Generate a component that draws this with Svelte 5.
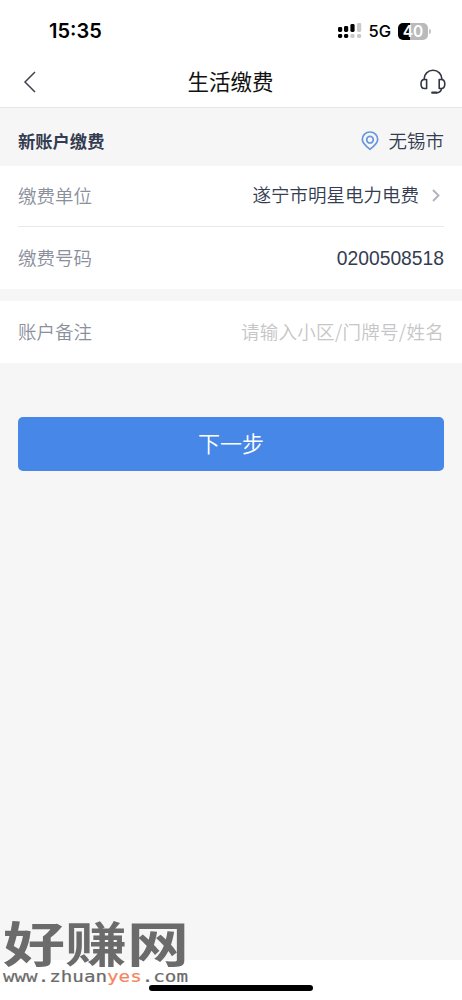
<script lang="ts">
  let time = '15:35'
  let battery = 40
  let city = '无锡市'
  let company = '遂宁市明星电力电费'
  let account = '0200508518'
  let note = ''
</script>

<div class="page">
  <header>
    <div class="status">
      <span class="time">{time}</span>
      <div class="indicators">
        <svg class="signal" width="24" height="16" viewBox="0 0 24 16">
          <g fill="#000">
            <rect x="0" y="4" width="4.2" height="5" rx="1.4" />
            <rect x="6" y="3" width="4.2" height="6" rx="1.4" />
            <rect x="12.4" y="1" width="4.2" height="8" rx="1.4" />
            <rect x="0" y="11" width="4.2" height="4" rx="1.4" />
            <rect x="6" y="11" width="4.2" height="4" rx="1.4" />
          </g>
          <g fill="#c9c9c9">
            <rect x="19" y="0" width="4.2" height="9" rx="1.4" />
            <rect x="12.4" y="11" width="4.2" height="4" rx="1.4" />
            <rect x="19" y="11" width="4.2" height="4" rx="1.4" />
          </g>
        </svg>
        <span class="network">5G</span>
        <span class="battery" style="--level: {battery}%">{battery}</span>
        <i class="cap"></i>
      </div>
    </div>

    <nav>
      <svg class="back" width="14" height="22" viewBox="0 0 14 22">
        <path d="M12 1 2 11l10 10" fill="none" stroke="#41434d" stroke-width="1.5" />
      </svg>
      <h1>生活缴费</h1>
      <svg class="service" width="26" height="26" viewBox="0 0 26 26">
        <g fill="none" stroke="#333640" stroke-width="1.6" stroke-linecap="round" stroke-linejoin="round">
          <path d="M4 10.5C4 5 8 1.3 13 1.3S22 5 22 10.5" />
          <path d="M6.6 10.5v9H4.4C2.3 19.5 1 17.7 1 15s1.3-4.5 3.4-4.5z" />
          <path d="M19.2 10.5v9h2.1c2.1 0 3.5-1.8 3.5-4.5s-1.4-4.5-3.5-4.5z" />
          <path d="M21.5 19.7c-.4 2.6-2.1 4-5 4.1" />
          <path d="M12.2 23.7h4.3" stroke-width="2.2" />
        </g>
      </svg>
    </nav>
  </header>

  <main>
    <div class="heading">
      <h2>新账户缴费</h2>
      <div class="city">
        <svg width="18" height="20" viewBox="0 0 18 20">
          <g fill="none" stroke="#6797dc" stroke-width="1.7">
            <path d="M9 18.3C5.8 15.8 1.3 12.5 1.3 8.500a7.700 7.500 0 0 1 15.400 0c0 4-4.500 7.300-7.700 9.800z" stroke-linejoin="round" />
            <circle cx="9" cy="8.7" r="3.3" />
          </g>
        </svg>
        <span>{city}</span>
      </div>
    </div>

    <section>
      <div class="row company">
        <label for="company">缴费单位</label>
        <span id="company">{company}</span>
        <svg width="8" height="13" viewBox="0 0 8 13">
          <path d="m1 1 5.5 5.5L1 12" fill="none" stroke="#b1b3bd" stroke-width="1.9" />
        </svg>
      </div>
      <div class="row">
        <label for="account">缴费号码</label>
        <input id="account" class="digits" bind:value={account} />
      </div>
    </section>

    <section class="remark">
      <div class="row">
        <label for="note">账户备注</label>
        <input id="note" class="note" bind:value={note} placeholder="请输入小区/门牌号/姓名" />
      </div>
    </section>

    <button>下一步</button>
  </main>

  <footer>
    <i class="home"></i>
  </footer>

  <svg class="watermark" width="200" height="80" viewBox="0 0 200 80">
    <text class="brand" transform="translate(3 48) scale(1 .8)" textLength="186" lengthAdjust="spacingAndGlyphs">好赚网</text>
    <text class="url" x="3" y="67.5" textLength="185" lengthAdjust="spacingAndGlyphs">www.zhuan<tspan>yes</tspan>.com</text>
  </svg>
</div>

<style>
  :global(body) {
    margin: 0;
  }

  .page {
    position: relative;
    display: flex;
    flex-direction: column;
    height: 1000px;
    overflow: hidden;
    background: #fff;
    color: #343c51;
    font-family: 'Liberation Sans', 'Noto Sans CJK SC', sans-serif;
    font-size: 18.5px;
    font-weight: 350;
  }

  header {
    box-sizing: border-box;
    height: 108px;
    border-bottom: 1px solid #e6e6e6;
  }

  .status {
    display: flex;
    align-items: center;
    justify-content: space-between;
    height: 57px;
    padding: 5px 31px 0 49px;
    box-sizing: border-box;
    color: #000;
    font-family: Inter, sans-serif;
  }

  .time {
    font-size: 20px;
    font-weight: 600;
  }

  .indicators {
    display: flex;
    align-items: center;
  }

  .network {
    margin: 0 7px 0 6px;
    font-size: 16.5px;
    font-weight: 500;
  }

  .battery {
    width: 30px;
    height: 17px;
    border-radius: 5px;
    background: linear-gradient(to right, #000 var(--level), #bababa var(--level));
    color: #fff;
    font-size: 15.5px;
    font-weight: 600;
    line-height: 17px;
    text-align: center;
  }

  .cap {
    width: 2px;
    height: 5px;
    margin-left: 1px;
    border-radius: 0 2px 2px 0;
    background: #c4c4c4;
  }

  nav {
    display: flex;
    align-items: center;
    justify-content: space-between;
    height: 50px;
    padding: 0 16px 0 23px;
  }

  h1 {
    margin: 0 0 3px 4px;
    color: #111;
    font-size: 21.5px;
    font-weight: 400;
  }

  main {
    display: flex;
    flex-direction: column;
    height: 852px;
    background: #f6f6f6;
  }

  .heading {
    display: flex;
    align-items: center;
    justify-content: space-between;
    height: 58px;
    padding: 8px 18px 0;
    box-sizing: border-box;
  }

  h2 {
    margin: 0 0 2px;
    font-size: 17.3px;
    font-weight: 700;
  }

  .city {
    display: flex;
    align-items: center;
    gap: 9px;
  }

  .city span {
    padding-bottom: 3px;
  }

  section {
    padding: 0 18px;
    background: #fff;
  }

  .remark {
    margin-top: 12px;
  }

  .row {
    display: flex;
    align-items: center;
    height: 62px;
  }

  .company {
    height: 60px;
    border-bottom: 1px solid #e8e8e8;
  }

  .company svg {
    margin: 0 4px 1px 13px;
  }

  .company span {
    padding-bottom: 4px;
  }

  label {
    margin-right: auto;
    padding-bottom: 3px;
    color: #8b8f9c;
  }

  input {
    width: 230px;
    padding: 0;
    border: 0;
    outline: 0;
    background: none;
    color: inherit;
    font: inherit;
    text-align: right;
  }

  .digits {
    padding-top: 1px;
    font-size: 19.3px;
  }

  .note {
    padding-bottom: 2px;
    font-family: 'Noto Sans CJK SC', sans-serif;
    letter-spacing: 0.3px;
  }

  input::placeholder {
    color: #c6c6c6;
  }

  button {
    height: 54px;
    margin: 54px 18px 0;
    padding: 0 0 4px;
    border: 0;
    border-radius: 5px;
    background: #4787e7;
    color: #fff;
    font: 350 22px 'Noto Sans CJK SC', sans-serif;
  }

  footer {
    display: flex;
    justify-content: center;
    align-items: center;
    height: 40px;
    padding-top: 15px;
    box-sizing: border-box;
  }

  .home {
    width: 164px;
    height: 6px;
    border-radius: 3px;
    background: #000;
  }

  .watermark {
    position: absolute;
    left: 0;
    bottom: 6px;
    overflow: visible;
  }

  .brand {
    fill: #6b6b6b;
    font: 700 60px 'Noto Sans CJK SC', sans-serif;
  }

  .url {
    fill: #6b6b6b;
    font: 15px 'DejaVu Sans Mono', monospace;
    stroke: #6b6b6b;
    stroke-width: 0.2;
  }

  .url tspan {
    fill: #f58562;
    stroke: #f58562;
  }
</style>
